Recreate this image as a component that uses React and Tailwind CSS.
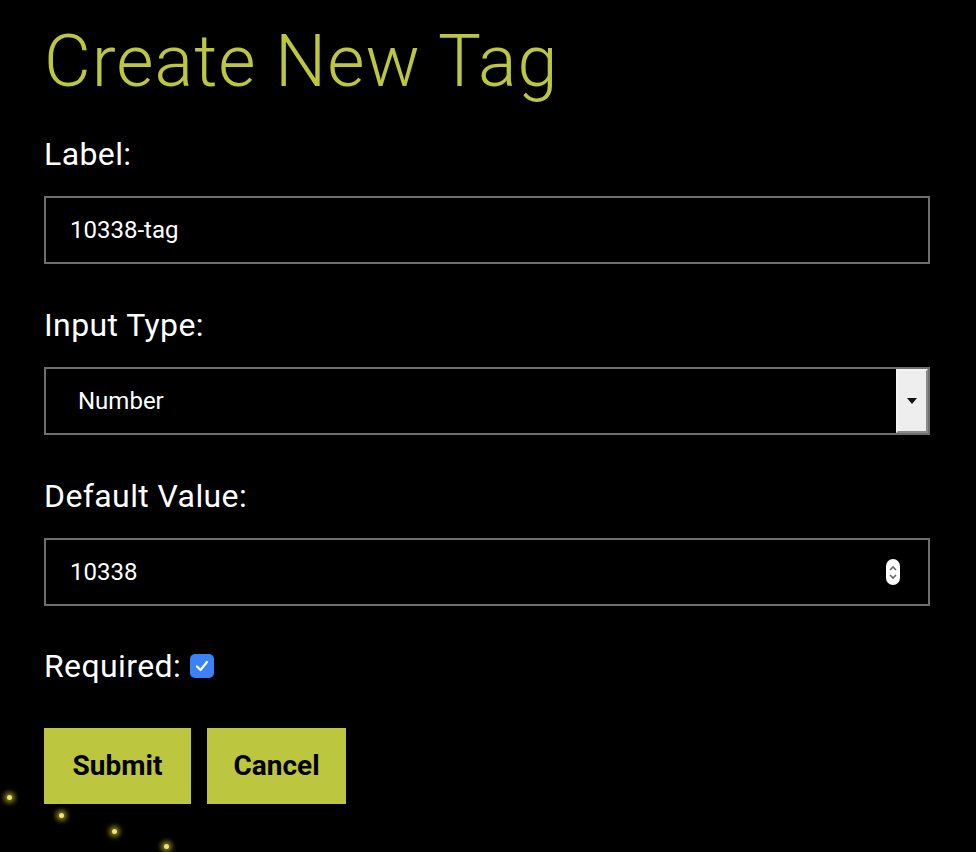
import { useState } from 'react'

const FONT = { fontFamily: 'Roboto, "Liberation Sans", sans-serif' }

function Field({ label, children }) {
  return (
    <div className="flex flex-col">
      <label className="mb-[26px] text-[32px] leading-none tracking-[0.4px] text-white">{label}</label>
      {children}
    </div>
  )
}

function SelectBox({ value }) {
  return (
    <div className="flex h-[68px] items-stretch border-2 border-[#6e6e6e] bg-black">
      <div className="flex flex-1 items-center pl-[32px] text-[24px] text-white">{value}</div>
      <div className="flex w-[32px] items-center justify-center border-2 border-t-[#f4f4f4] border-l-[#f4f4f4] border-b-[#8a8a8a] border-r-[#8a8a8a] bg-[#eeeeee]">
        <svg width="12" height="8" viewBox="0 0 12 8">
          <path d="M1 1 L11 1 L6 7 Z" fill="#111" />
        </svg>
      </div>
    </div>
  )
}

function NumberBox({ value }) {
  return (
    <div className="flex h-[68px] items-center border-2 border-[#6e6e6e] bg-black pl-[24px] pr-[28px]">
      <span className="flex-1 text-[24px] text-white">{value}</span>
      <div className="flex h-[26px] w-[14px] flex-col items-center justify-center gap-[3px] rounded-full bg-white">
        <svg width="8" height="5" viewBox="0 0 8 5">
          <path d="M1 4 L4 1 L7 4" stroke="#666" strokeWidth="1.6" fill="none" />
        </svg>
        <svg width="8" height="5" viewBox="0 0 8 5">
          <path d="M1 1 L4 4 L7 1" stroke="#666" strokeWidth="1.6" fill="none" />
        </svg>
      </div>
    </div>
  )
}

function Dot() {
  return <span className="block h-[5px] w-[5px] rounded-full bg-[#efe56a] shadow-[0_0_5px_3px_rgba(190,180,50,0.7)]" />
}

export default function App() {
  const [required, setRequired] = useState(true)

  return (
    <div className="relative h-[852px] w-[976px] overflow-hidden bg-black" style={FONT}>
      <div className="flex flex-col pl-[44px] pr-[46px] pt-[26px]">
        <h1 className="text-[72px] leading-none font-light tracking-[1px] text-[#bcc63f]">Create New Tag</h1>

        <div className="mt-[40px] flex flex-col gap-[45px]">
          <Field label="Label:">
            <div className="flex h-[68px] items-center border-2 border-[#6e6e6e] bg-black pl-[24px] text-[24px] text-white">
              10338-tag
            </div>
          </Field>
          <Field label="Input Type:">
            <SelectBox value="Number" />
          </Field>
          <Field label="Default Value:">
            <NumberBox value="10338" />
          </Field>
        </div>

        <div className="mt-[44px] flex items-center gap-[9px] text-[32px] leading-none tracking-[0.4px] text-white">
          <span>Required:</span>
          <button
            type="button"
            onClick={() => setRequired(!required)}
            className="flex h-[24px] w-[24px] items-center justify-center rounded-[5px] bg-[#3b82f6]"
          >
            {required && (
              <svg width="14" height="12" viewBox="0 0 14 12">
                <path d="M2 6.5 L5.5 10 L12 2" stroke="white" strokeWidth="2.2" fill="none" strokeLinecap="round" strokeLinejoin="round" />
              </svg>
            )}
          </button>
        </div>

        <div className="mt-[46px] flex gap-[16px]">
          <button type="button" className="h-[76px] w-[147px] bg-[#bcc63f] text-[28px] font-bold text-black">
            Submit
          </button>
          <button type="button" className="h-[76px] w-[139px] bg-[#bcc63f] text-[28px] font-bold text-black">
            Cancel
          </button>
        </div>
      </div>

      <div className="absolute left-[7px] top-[795px]"><Dot /></div>
      <div className="absolute left-[59px] top-[813px]"><Dot /></div>
      <div className="absolute left-[112px] top-[829px]"><Dot /></div>
      <div className="absolute left-[164px] top-[844px]"><Dot /></div>
    </div>
  )
}
